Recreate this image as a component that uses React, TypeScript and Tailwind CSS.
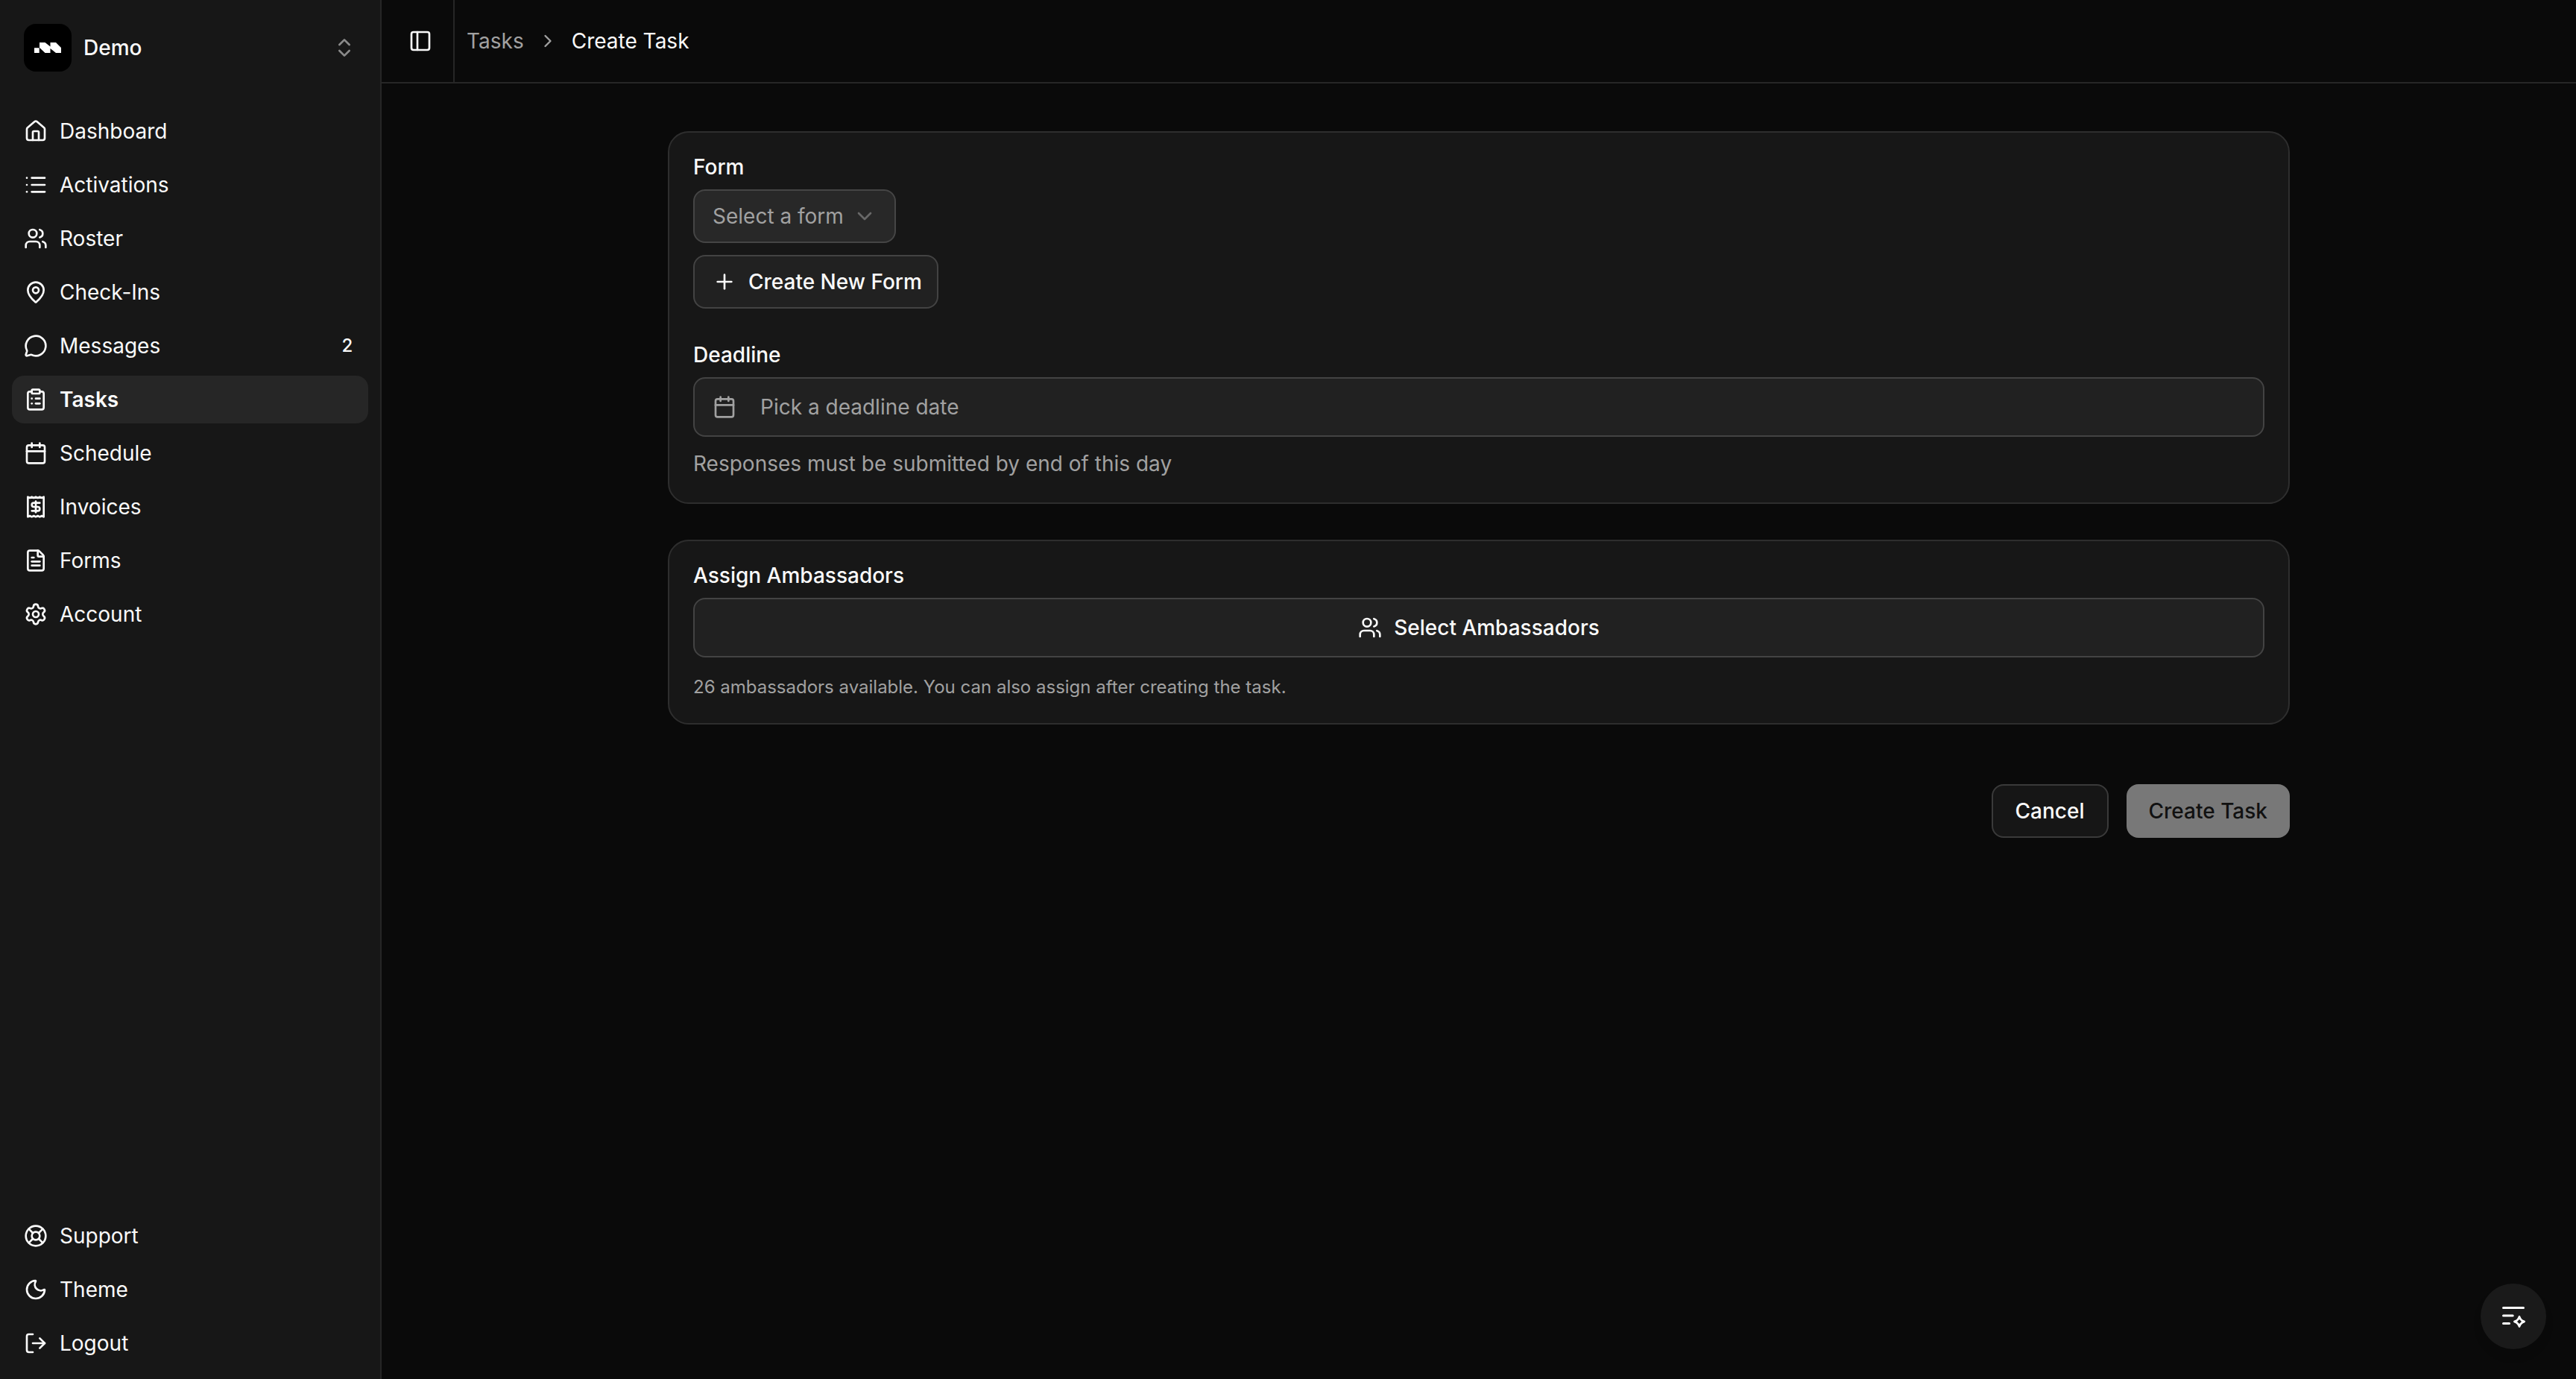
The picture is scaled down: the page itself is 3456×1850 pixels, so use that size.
import React, { useState } from 'react';
import {
  Calendar,
  ChevronDown,
  ChevronRight,
  ChevronsUpDown,
  ClipboardList,
  FileText,
  House,
  LifeBuoy,
  List,
  LogOut,
  MapPin,
  MessageCircle,
  Moon,
  PanelLeft,
  Plus,
  Receipt,
  Settings,
  Users,
  type LucideIcon,
} from 'lucide-react';

interface NavEntry {
  label: string;
  icon: LucideIcon;
  badge?: number;
  active?: boolean;
}

const mainNav: NavEntry[] = [
  { label: 'Dashboard', icon: House },
  { label: 'Activations', icon: List },
  { label: 'Roster', icon: Users },
  { label: 'Check-Ins', icon: MapPin },
  { label: 'Messages', icon: MessageCircle, badge: 2 },
  { label: 'Tasks', icon: ClipboardList, active: true },
  { label: 'Schedule', icon: Calendar },
  { label: 'Invoices', icon: Receipt },
  { label: 'Forms', icon: FileText },
  { label: 'Account', icon: Settings },
];

const footerNav: NavEntry[] = [
  { label: 'Support', icon: LifeBuoy },
  { label: 'Theme', icon: Moon },
  { label: 'Logout', icon: LogOut },
];

const Logo: React.FC = () => (
  <svg viewBox="0 0 36 14" className="h-[14px] w-[36px]" fill="currentColor">
    <path d="M0 7.300h6.700V14H0zM7 0h7.500l7 5.500V0H29l7 7v7h-7l-7.500-6v6h-7L7 7z" />
  </svg>
);

const NavItem: React.FC<{ entry: NavEntry }> = ({ entry }) => {
  const Icon = entry.icon;
  return (
    <li>
      <a
        href="#"
        aria-current={entry.active ? 'page' : undefined}
        className={`flex h-16 items-center gap-4 rounded-2xl pl-4 pr-2 ${
          entry.active ? 'bg-[#262626] font-semibold' : 'hover:bg-[#262626]'
        }`}
      >
        <Icon size={32} className="shrink-0" />
        <span className="flex-1">{entry.label}</span>
        {entry.badge && (
          <span className="flex size-10 items-center justify-center text-2xl font-medium">{entry.badge}</span>
        )}
      </a>
    </li>
  );
};

const Sidebar: React.FC = () => (
  <aside className="flex w-[512px] shrink-0 flex-col justify-between border-r-2 border-[#262626] bg-[#171717] p-4">
    <div>
      <button className="flex h-24 w-full items-center gap-4 px-4 text-left">
        <span className="flex size-16 items-center justify-center rounded-2xl bg-black text-white">
          <Logo />
        </span>
        <span className="flex-1 font-medium">Demo</span>
        <ChevronsUpDown size={32} className="text-[#8a8a8a]" />
      </button>
      <nav aria-label="Main" className="mt-8">
        <ul className="flex flex-col gap-2">
          {mainNav.map((entry) => <NavItem key={entry.label} entry={entry} />)}
        </ul>
      </nav>
    </div>
    <nav aria-label="Secondary">
      <ul className="flex flex-col gap-2">
        {footerNav.map((entry) => <NavItem key={entry.label} entry={entry} />)}
      </ul>
    </nav>
  </aside>
);

const Header: React.FC = () => (
  <header className="flex h-28 items-stretch border-b-2 border-[#262626]">
    <div className="flex items-center border-r-2 border-[#262626] pl-6 pr-4">
      <button aria-label="Toggle sidebar" className="flex size-14 items-center justify-center">
        <PanelLeft size={32} />
      </button>
    </div>
    <nav aria-label="Breadcrumb" className="flex items-center pl-4">
      <ol className="flex items-center gap-[18px]">
        <li><a href="#" className="text-[#a1a1a1]">Tasks</a></li>
        <li aria-hidden="true"><ChevronRight size={28} className="text-[#a1a1a1]" /></li>
        <li aria-current="page">Create Task</li>
      </ol>
    </nav>
  </header>
);

export default function App() {
  const [form, setForm] = useState('');

  return (
    <div className="flex min-h-screen bg-[#0a0a0a] font-['Inter',sans-serif] text-[28px] leading-10 text-[#fafafa]">
      <Sidebar />
      <div className="flex min-w-0 flex-1 flex-col">
        <Header />
        <main className="mx-auto flex w-full max-w-[2240px] flex-col px-8 pt-16">
          <section className="rounded-[28px] border-2 border-[#2e2e2e] bg-[#171717] p-8">
            <div className="flex flex-col items-start gap-4">
              <label htmlFor="form" className="font-medium leading-7">Form</label>
              <div className="grid w-[272px] items-center">
                <select
                  id="form"
                  value={form}
                  onChange={(e) => setForm(e.target.value)}
                  className="col-start-1 row-start-1 h-[72px] appearance-none rounded-2xl border-2 border-[#454545] bg-[#282828] px-6 text-[#a1a1a1]"
                >
                  <option value="">Select a form</option>
                </select>
                <ChevronDown
                  size={32}
                  className="pointer-events-none col-start-1 row-start-1 mr-[26px] justify-self-end text-[#686868]"
                />
              </div>
              <button className="flex h-[72px] items-center gap-4 rounded-2xl border-2 border-[#434343] bg-[#212121] pl-6 pr-5 font-medium">
                <Plus size={32} />
                Create New Form
              </button>
            </div>

            <div className="mt-12 flex flex-col items-start gap-4">
              <label htmlFor="deadline" className="font-medium leading-7">Deadline</label>
              <button
                id="deadline"
                className="flex h-20 w-full items-center gap-8 rounded-2xl border-2 border-[#434343] bg-[#212121] px-6 text-[#a1a1a1]"
              >
                <Calendar size={32} />
                Pick a deadline date
              </button>
              <p className="text-[#a1a1a1]">Responses must be submitted by end of this day</p>
            </div>
          </section>

          <section className="mt-12 rounded-[28px] border-2 border-[#2e2e2e] bg-[#171717] p-8">
            <div className="flex flex-col items-start gap-4">
              <label htmlFor="ambassadors" className="font-medium leading-7">Assign Ambassadors</label>
              <button
                id="ambassadors"
                className="flex h-20 w-full items-center justify-center gap-4 rounded-2xl border-2 border-[#434343] bg-[#212121] font-medium"
              >
                <Users size={32} />
                Select Ambassadors
              </button>
            </div>
            <p className="mt-6 text-2xl text-[#a1a1a1]">
              26 ambassadors available. You can also assign after creating the task.
            </p>
          </section>

          <div className="mt-20 flex justify-end gap-6 font-medium">
            <button className="h-[72px] rounded-2xl border-2 border-[#3a3a3a] bg-[#161616] px-[30px]">Cancel</button>
            <button disabled className="h-[72px] rounded-2xl bg-[#787878] px-[30px] text-[#111111]">Create Task</button>
          </div>
        </main>
      </div>

      {/* Floating assistant button */}
      <button
        aria-label="Open assistant"
        className="fixed bottom-10 right-10 flex size-22 items-center justify-center rounded-full bg-[#1a1a1a] text-white shadow-lg"
      >
        <svg viewBox="0 0 32 32" className="size-8" fill="none">
          <path d="M2.500 4.500h27M2.500 15h12.700M2.500 25.500h8" stroke="currentColor" strokeWidth="3" strokeLinecap="round" />
          <path
            d="M24 15q1 0 1.400 1.200Q26.700 20.300 30.800 21.600Q32 22 32 23t-1.200 1.400Q26.700 25.700 25.400 29.800Q25 31 24 31t-1.400-1.200Q21.300 25.700 17.200 24.400Q16 24 16 23t1.200-1.400Q21.300 20.300 22.600 16.200Q23 15 24 15zM24 20l-3 3l3 3l3-3z"
            fill="currentColor"
            fillRule="evenodd"
          />
        </svg>
      </button>
    </div>
  );
}
